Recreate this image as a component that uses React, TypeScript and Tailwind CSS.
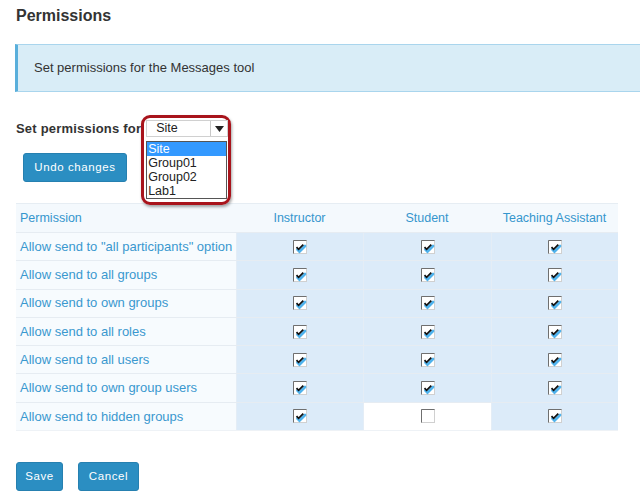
import React from 'react'

const rows = [
  { label: 'Allow send to "all participants" option', checks: [true, true, true] },
  { label: 'Allow send to all groups', checks: [true, true, true] },
  { label: 'Allow send to own groups', checks: [true, true, true] },
  { label: 'Allow send to all roles', checks: [true, true, true] },
  { label: 'Allow send to all users', checks: [true, true, true] },
  { label: 'Allow send to own group users', checks: [true, true, true] },
  { label: 'Allow send to hidden groups', checks: [true, false, true] },
]

function CheckBox({ checked }: { checked: boolean }) {
  return (
    <svg width="14" height="14" viewBox="0 0 14 14">
      <rect x="0.5" y="0.5" width="13" height="13" fill="#fff" stroke="#d0d0d0" />
      <path d="M0.5 13.5V0.5H13.5" fill="none" stroke="#6f6f6f" />
      {checked && (
        <>
          <path d="M4.5 9.5L6.5 11.5L12 6" fill="none" stroke="#4fb2ec" strokeWidth="2.8" strokeLinecap="round" />
          <path d="M3.5 7.2L5.6 9.3L10.3 4.6" fill="none" stroke="#111" strokeWidth="1.8" />
        </>
      )}
    </svg>
  )
}

export default function App() {
  return (
    <div className="w-[640px] h-[502px] bg-white overflow-hidden font-['Liberation_Sans',Arial,sans-serif] text-[#333]">
      <div className="pl-4 pt-[7px]">
        <h1 className="text-[16px] font-bold leading-[18px]">Permissions</h1>

        {/* info banner */}
        <div className="mt-[19px] -ml-px h-[48px] flex items-center bg-[#d9edf7] border-y border-[#a9d5ed] border-l-[3px] border-l-[#5aafdb] pl-[16px]">
          <span className="text-[13px] text-[#333]">Set permissions for the Messages tool</span>
        </div>

        {/* set permissions for */}
        <div className="mt-[28px] flex items-center h-[17px]">
          <span className="text-[13px] font-bold text-[#333] tracking-[0.2px]">Set permissions for</span>
          <div className="relative ml-[5px]">
            <div className="absolute -left-[5px] -top-[5px] w-[90px] h-[90px] rounded-[9px] border-[3px] border-[#a8141c] shadow-[1px_2px_3px_rgba(0,0,0,0.35)]" />
            <div className="relative flex h-[17px] w-[82px] bg-white border border-[#d0d0d0]">
              <span className="flex-1 pl-[9px] text-[12.5px] leading-[15px] text-[#222]">Site</span>
              <span className="w-[17px] border-l border-[#c8c8c8] flex items-center justify-center">
                <svg width="9" height="6" viewBox="0 0 9 6"><path d="M0 0H9L4.5 6Z" fill="#222" /></svg>
              </span>
            </div>
            <div className="absolute left-0 top-[21px] w-[81px] h-[58px] bg-white border border-[#555] text-[12.5px] leading-[14px] text-[#222]">
              <div className="bg-[#3399ff] text-white pl-[1px]">Site</div>
              <div className="pl-[1px]">Group01</div>
              <div className="pl-[1px]">Group02</div>
              <div className="pl-[1px]">Lab1</div>
            </div>
          </div>
        </div>

        <button className="mt-[16px] ml-[7px] h-[29px] w-[104px] bg-[#2b8ec2] border border-[#2680b0] rounded-[3px] text-white text-[11.5px] tracking-[0.6px]">
          Undo changes
        </button>

        {/* table */}
        <div className="mt-[21px] w-[602px] border-b border-[#eef2f6]">
          <div className="grid grid-cols-[220px_127px_128px_127px] h-[29px] bg-[#f4f9fd] border-t border-[#e6edf3] items-center text-[12.5px] text-[#3596cd]">
            <div className="pl-[4px]">Permission</div>
            <div className="text-center">Instructor</div>
            <div className="text-center">Student</div>
            <div className="text-center">Teaching Assistant</div>
          </div>
          {rows.map((row, i) => (
            <div key={i} className="grid grid-cols-[220px_127px_128px_127px] h-[28.3px] border-t border-[#e6ecf2]">
              <div className="bg-[#f7fbfe] flex items-center pl-[4px] text-[13px] text-[#3a98cf] whitespace-nowrap">{row.label}</div>
              {row.checks.map((c, j) => (
                <div
                  key={j}
                  className={`flex items-center justify-center border-l border-[#e4edf6] ${c ? 'bg-[#dcebf9]' : 'bg-white'}`}
                >
                  <CheckBox checked={c} />
                </div>
              ))}
            </div>
          ))}
        </div>

        <div className="mt-[31px] flex gap-[15px]">
          <button className="h-[29px] w-[47px] bg-[#2b8ec2] border border-[#2680b0] rounded-[3px] text-white text-[11.5px] tracking-[0.6px]">Save</button>
          <button className="h-[29px] w-[61px] bg-[#2b8ec2] border border-[#2680b0] rounded-[3px] text-white text-[11.5px] tracking-[0.6px]">Cancel</button>
        </div>
      </div>
    </div>
  )
}
